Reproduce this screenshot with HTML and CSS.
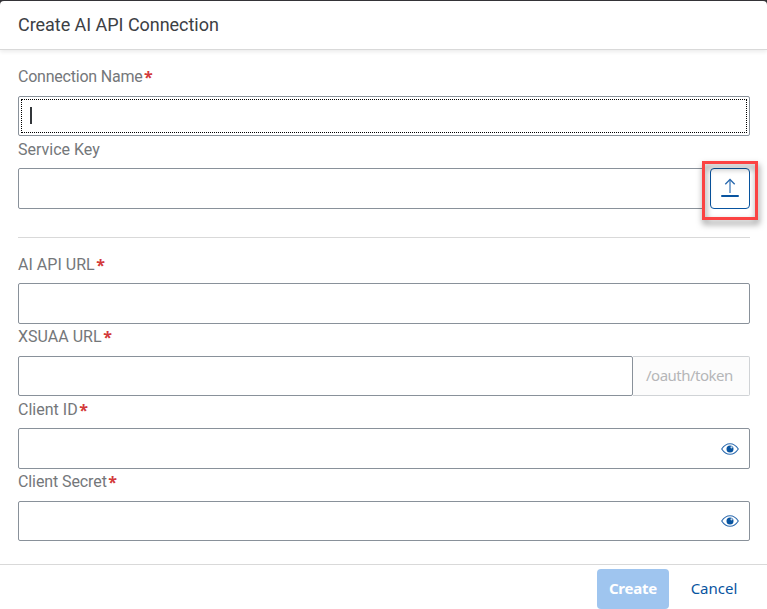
FILE: index.html
```html
<!DOCTYPE html>
<html lang="en">
<head>
<meta charset="utf-8">
<title>Create AI API Connection</title>
<link rel="stylesheet" href="styles.css">
</head>
<body>
<main class="dialog">
  <header class="header"><h1 class="title">Create AI API Connection</h1></header>
  <section class="content">
    <div class="label first"><span class="name connection">Connection Name</span><b class="req">*</b></div>
    <div class="input focused"><span class="caret"></span></div>
    <div class="label"><span class="name">Service Key</span></div>
    <div class="row">
      <div class="input tall key-input"></div>
      <div class="upload">
        <svg class="upload-icon" width="18" height="20" viewBox="0 0 18 20" fill="none">
          <path d="M9 15V1.8" stroke="#84a9d1" stroke-width="2"/>
          <path d="M4.3 6.2L9 1.5L13.7 6.2" stroke="#2868ae" stroke-width="1.3"/>
          <path d="M1 18H17" stroke="#0854a0" stroke-width="2" stroke-linecap="round"/>
        </svg>
        <div class="highlight"></div>
      </div>
    </div>
    <div class="divider"></div>
    <div class="label api"><span class="name url">AI API URL</span><b class="req">*</b></div>
    <div class="input tall"></div>
    <div class="label raised"><span class="name url">XSUAA URL</span><b class="req">*</b></div>
    <div class="row">
      <div class="input grow"></div>
      <div class="suffix">/oauth/token</div>
    </div>
    <div class="label"><span class="name url">Client ID</span><b class="req">*</b></div>
    <div class="input tall secret">
      <svg class="eye" width="18" height="12" viewBox="0 0 18 12">
        <path d="M.7 6Q4.2 .7 9 .7T17.3 6Q13.8 11.3 9 11.3T.7 6Z" fill="#fff" stroke="#2b6aaf" stroke-width="1.1"/>
        <circle cx="9" cy="6" r="3.5" fill="#0854a0"/><circle cx="10.5" cy="4.3" r="1.1" fill="#c9daeb"/>
      </svg>
    </div>
    <div class="label raised"><span class="name client">Client Secret</span><b class="req">*</b></div>
    <div class="input secret">
      <svg class="eye" width="18" height="12" viewBox="0 0 18 12">
        <path d="M.7 6Q4.2 .7 9 .7T17.3 6Q13.8 11.3 9 11.3T.7 6Z" fill="#fff" stroke="#2b6aaf" stroke-width="1.1"/>
        <circle cx="9" cy="6" r="3.5" fill="#0854a0"/><circle cx="10.5" cy="4.3" r="1.1" fill="#c9daeb"/>
      </svg>
    </div>
  </section>
  <footer class="footer">
    <div class="button create">Create</div>
    <div class="button cancel">Cancel</div>
  </footer>
</main>
</body>
</html>
```
FILE: styles.css
```css
* { box-sizing: border-box; }
body {
  margin: 0;
  padding-top: 1px;
  height: 609px;
  overflow: hidden;
  background: #353438;
  font: 16px/20px Roboto, "Liberation Sans", sans-serif;
  color: #3c4044;
}
.dialog {
  height: 608px;
  display: flex;
  flex-direction: column;
  background: #fff;
  border-radius: 4px 4px 0 0;
}
.header {
  height: 49px;
  padding: 0 18px;
  display: flex;
  align-items: center;
  border-bottom: 1px solid #d9d9d9;
  box-shadow: 0 2px 4px rgba(0, 0, 0, .08);
}
.title { margin: 0; font-size: 18px; font-weight: 400; line-height: 24px; letter-spacing: -.04px; }
.content { height: 514px; padding: 0 17px 0 18px; }
.label { height: 32px; padding-top: 4px; display: flex; color: #74777a; }
.label.first { height: 46px; padding-top: 17px; }
.label.api { height: 45px; padding-top: 17px; }
.label.raised { padding-top: 3px; }
.connection { letter-spacing: -.22px; }
.client { letter-spacing: -.1px; }
.url { letter-spacing: .02px; }
.req { margin-left: 1.5px; color: #d33a3a; font: 700 16px/20px "Open Sans", sans-serif; }
.input { height: 40px; border: 1px solid #89919a; border-radius: 2px; background: #fff; }
.tall { height: 41px; }
.row { display: flex; }
.grow { flex: 1; }
.focused { padding: 2px; }
.caret {
  display: block;
  height: 34px;
  border: 1px dotted #000;
  background: linear-gradient(#32363a, #32363a) 8px 7px / 2px 17px no-repeat;
}
.key-input { flex: 1; margin-right: 5px; }
.upload {
  position: relative;
  width: 40px;
  height: 41px;
  display: flex;
  align-items: center;
  justify-content: center;
  border: 1px solid #0854a0;
  border-radius: 4px;
}
.upload-icon { margin-bottom: 1px; }
.highlight {
  position: absolute;
  inset: -8px -9px -12px -9px;
  border: 3px solid #fb4343;
  filter: drop-shadow(1px 4px 3px rgba(0, 0, 0, .5));
}
.divider { height: 1px; margin-top: 28px; background: #d9d9d9; }
.suffix {
  width: 117px;
  height: 40px;
  border: 1px solid #d0d3d6;
  border-left: 0;
  border-radius: 0 2px 2px 0;
  background: #fcfcfc;
  color: #b5b6b8;
  font: 15px/37px "Noto Sans", sans-serif;
  letter-spacing: -.5px;
  padding-left: 13px;
}
.secret { display: flex; align-items: center; justify-content: flex-end; padding-right: 10px; }
.footer {
  height: 45px;
  display: flex;
  justify-content: flex-end;
  gap: 9px;
  padding: 4px 17px 0;
  border-top: 1px solid #d9d9d9;
}
.button {
  width: 72px;
  height: 40px;
  border-radius: 4px;
  text-align: center;
  font: 15px/39px "Noto Sans", sans-serif;
}
.create { background: #9fc5ef; color: #fff; font-weight: 700; letter-spacing: -.2px; }
.cancel { color: #0854a0; }
```
